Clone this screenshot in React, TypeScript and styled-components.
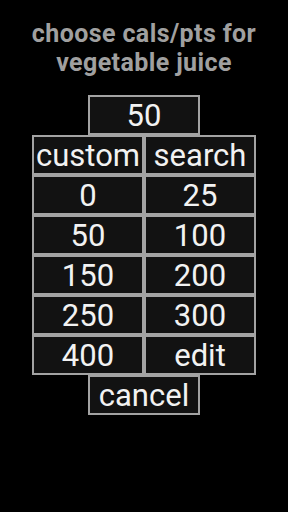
import React from "react";
import styled, { createGlobalStyle } from "styled-components";

const Global = createGlobalStyle`
  html, body { margin: 0; padding: 0; background: #000; }
  body { width: 288px; height: 512px; overflow: hidden; font-family: Roboto, "Liberation Sans", sans-serif; }
`;

const Screen = styled.div`
  width: 288px;
  height: 512px;
  background: #000;
  display: flex;
  flex-direction: column;
  align-items: center;
  box-sizing: border-box;
  padding-top: 19px;
`;

const Title = styled.h1`
  margin: 0 0 18px 0;
  font-family: Roboto, "Liberation Sans", sans-serif;
  font-weight: 700;
  font-size: 25px;
  letter-spacing: 0.4px;
  line-height: 29px;
  color: #a0a0a0;
  text-align: center;
  white-space: nowrap;
`;

const Grid = styled.div`
  display: grid;
  grid-template-columns: 112px 112px;
`;

const Cell = styled.button`
  box-sizing: border-box;
  width: 112px;
  height: 40px;
  margin: 0;
  padding: 1px 0 0 0;
  background: #121212;
  border: 2px solid #a3a3a3;
  border-radius: 0;
  color: #f2f2f2;
  font-family: Roboto, "Liberation Sans", sans-serif;
  font-weight: 400;
  font-size: 31px;
  line-height: 35px;
  text-align: center;
  white-space: nowrap;
  overflow: hidden;
`;

const values = ["0", "25", "50", "100", "150", "200", "250", "300", "400", "edit"];

export default function App() {
  return (
    <>
      <Global />
      <Screen>
        <Title>
          choose cals/pts for
          <br />
          vegetable juice
        </Title>
        <Cell>50</Cell>
        <Grid>
          <Cell>custom</Cell>
          <Cell>search</Cell>
          {values.map((v) => (
            <Cell key={v}>{v}</Cell>
          ))}
        </Grid>
        <Cell>cancel</Cell>
      </Screen>
    </>
  );
}
